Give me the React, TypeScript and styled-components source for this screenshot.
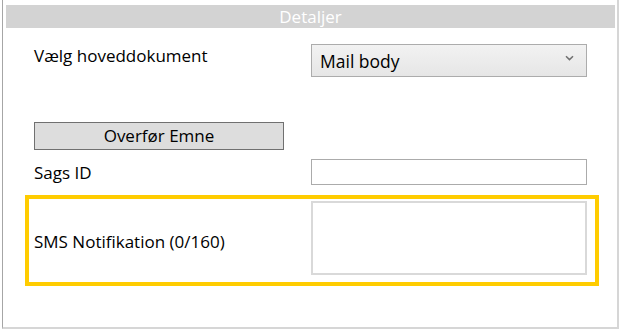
import React from "react";
import styled, { createGlobalStyle } from "styled-components";

const Global = createGlobalStyle`
  html, body { margin: 0; padding: 0; background: #ffffff; }
  body { font-family: "Open Sans", "Noto Sans", sans-serif; color: #000; }
  * { box-sizing: border-box; }
`;

const Page = styled.div`
  width: 622px;
  height: 332px;
  padding: 0 3px 3px 2px;
`;

const Panel = styled.div`
  height: 100%;
  border-left: 1px solid #a6a6a6;
  border-right: 2px solid #d6d6d6;
  border-bottom: 2px solid #d6d6d6;
  padding: 5px 2px 0 3px;
  display: flex;
  flex-direction: column;
`;

const Header = styled.div`
  height: 23px;
  background: #d3d3d3;
  color: #ffffff;
  font-size: 17px;
  line-height: 23px;
  text-align: center;
`;

const Body = styled.div`
  display: flex;
  flex-direction: column;
  padding: 16px 26px 0 19px;
`;

const Row = styled.div<{ $h: number; $mt?: number }>`
  display: grid;
  grid-template-columns: 277px 276px;
  align-items: center;
  height: ${(p) => p.$h}px;
  margin-top: ${(p) => p.$mt ?? 0}px;
  padding-left: 9px;
`;

const Label = styled.div<{ $top?: boolean }>`
  font-size: 17px;
  white-space: nowrap;
  align-self: ${(p) => (p.$top ? "start" : "center")};
  margin-top: ${(p) => (p.$top ? "0px" : "0")};
`;

const Select = styled.div`
  height: 33px;
  border: 1px solid #acacac;
  background: linear-gradient(#f2f2f2, #e6e6e6);
  display: flex;
  align-items: center;
  justify-content: space-between;
  padding: 0 12px 0 8px;
  font-size: 17.5px;
  color: #000;
  align-self: start;
`;

const Chevron = styled.svg`
  width: 9px;
  height: 6px;
  margin-top: -6px;
`;

const Button = styled.div`
  width: 250px;
  height: 28px;
  margin-left: 9px;
  border: 1px solid #707070;
  background: #dddddd;
  font-size: 17px;
  line-height: 26px;
  text-align: center;
`;

const Input = styled.div`
  height: 26px;
  border: 1px solid #ababab;
  background: #fff;
`;

const Highlight = styled.div`
  margin-top: 10px;
  width: 574px;
  height: 91px;
  border: 4px solid #ffcc00;
  display: grid;
  grid-template-columns: 277px 276px;
  align-items: center;
  padding: 2px 0 0 5px;
`;

const TextArea = styled.div`
  height: 74px;
  border: 2px solid #d9d9d9;
  background: #fff;
  align-self: start;
`;

const Spacer = styled.div`
  height: 38px;
`;

export default function App() {
  return (
    <Page>
      <Global />
      <Panel>
        <Header>Detaljer</Header>
        <Body>
          <Row $h={40}>
            <Label $top>Vælg hoveddokument</Label>
            <Select>
              <span>Mail body</span>
              <Chevron viewBox="0 0 9 6">
                <path d="M1 1.2 L4.5 4.6 L8 1.2" fill="none" stroke="#707070" strokeWidth="1.5" />
              </Chevron>
            </Select>
          </Row>
          <Spacer />
          <Button>Overfør Emne</Button>
          <Row $h={26} $mt={9}>
            <Label>Sags ID</Label>
            <Input />
          </Row>
          <Highlight>
            <Label>SMS Notifikation (0/160)</Label>
            <TextArea />
          </Highlight>
        </Body>
      </Panel>
    </Page>
  );
}
